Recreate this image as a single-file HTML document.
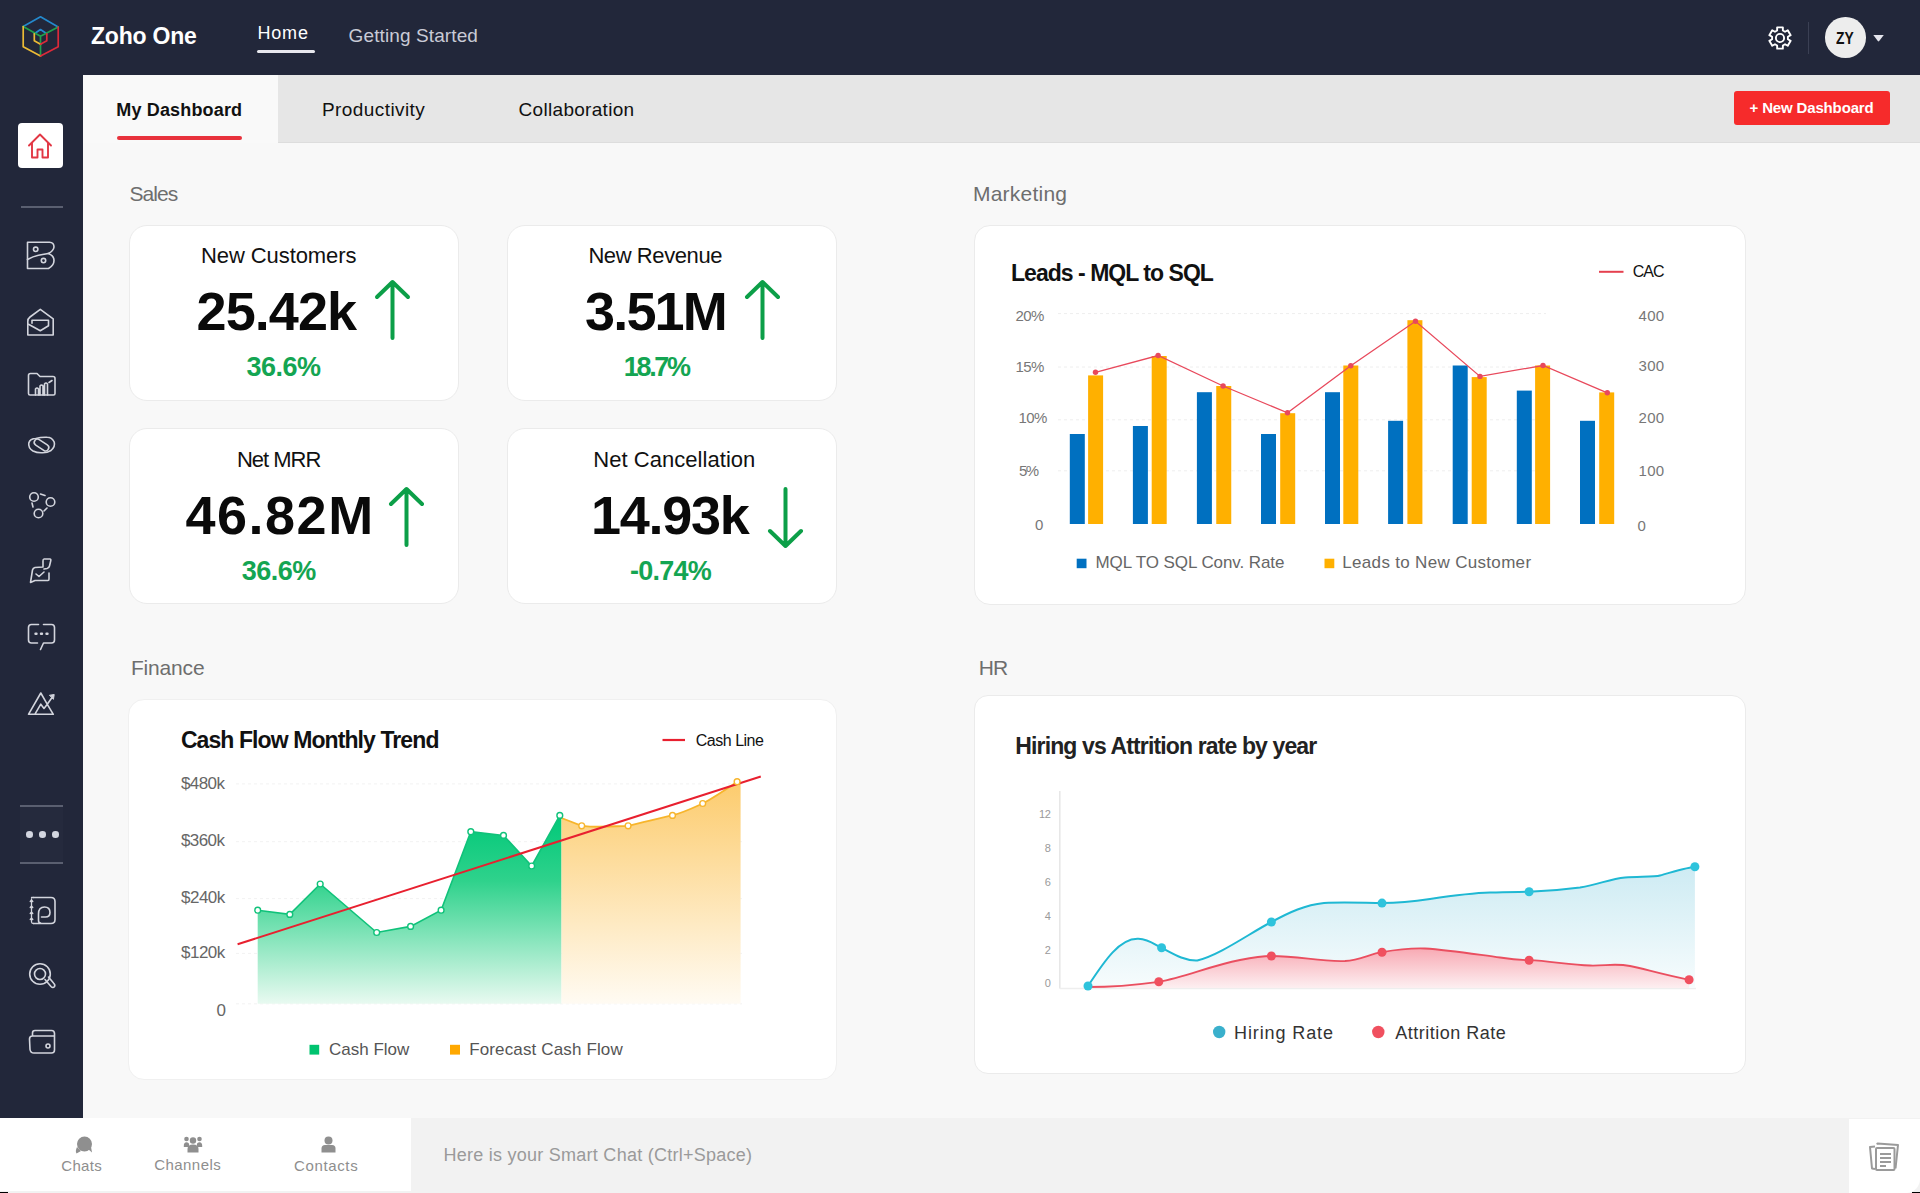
<!DOCTYPE html>
<html><head><meta charset="utf-8">
<style>
*{margin:0;padding:0;box-sizing:border-box}
html,body{width:1920px;height:1193px;overflow:hidden;background:#f8f8f8;font-family:"Liberation Sans",sans-serif}
.abs{position:absolute}
#top{left:0;top:0;width:1920px;height:75px;background:#22273a}
#side{left:0;top:75px;width:83px;height:1043px;background:#22273a}
#tabs{left:83px;top:75px;width:1837px;height:68px;background:#e6e6e6;border-bottom:1px solid #dddddd}
#tabact{left:83px;top:75px;width:195px;height:68px;background:#f9f9f9}
.card{position:absolute;background:#fff;border:1px solid #ebebeb;border-radius:18px}
.sec{position:absolute;font-size:21px;color:#6e6e6e;white-space:nowrap;line-height:1}
.txt{position:absolute;white-space:nowrap;line-height:1}
.big{font-size:54px;font-weight:bold;color:#0a0a0a}
.pct{font-size:27px;font-weight:bold;color:#14a552}
#bottom{left:0;top:1118px;width:1920px;height:75px;background:#f2f2f2}
#bwhite{left:0;top:1118px;width:411px;height:73px;background:#fff}
#bright{left:1849px;top:1119px;width:71px;height:74px;background:#fff;border-bottom-right-radius:14px}
</style></head>
<body>
<div id="top" class="abs"></div>
<div id="side" class="abs"></div>
<div id="tabs" class="abs"></div>
<div id="tabact" class="abs"></div>

<!-- logo -->
<svg class="abs" style="left:0;top:0" width="80" height="75" viewBox="0 0 80 75">
<g fill="none" stroke-width="1.7" stroke-linecap="round" stroke-linejoin="round">
<path d="M23.2 26.5 L40.5 16.8 L58.2 27" stroke="#2489cc"/>
<path d="M34.3 33.8 L40.5 29.5 L46.8 33.8" stroke="#2189cf"/>
<path d="M23.2 26.5 L40.5 36.2 L58.2 27 M40.5 36.2 V56" stroke="#20a04c"/>
<path d="M23.2 26.5 V46.8 L40.5 56 M34.3 33.8 V40.8 L40.5 44.3" stroke="#ecbb35"/>
<path d="M58.2 27 V46.8 L40.5 56 M46.8 33.8 V40.8 L40.5 44.3" stroke="#dc2a3a"/>
</g></svg>

<!-- top right -->
<svg class="abs" style="left:1766.2px;top:23.9px" width="28" height="28" viewBox="0 0 28 28"><g fill="none" stroke="#fff" stroke-width="1.9" stroke-linejoin="round"><path d="M11.13 6.53 L11.15 3.37 L16.85 3.37 L16.87 6.53 L19.03 7.78 L21.78 6.22 L24.63 11.15 L21.90 12.75 L21.90 15.25 L24.63 16.85 L21.78 21.78 L19.03 20.22 L16.87 21.47 L16.85 24.63 L11.15 24.63 L11.13 21.47 L8.97 20.22 L6.22 21.78 L3.37 16.85 L6.10 15.25 L6.10 12.75 L3.37 11.15 L6.22 6.22 L8.97 7.78 Z"/><circle cx="14" cy="14" r="4.1"/></g></svg>
<div class="abs" style="left:1808px;top:22px;width:1px;height:32px;background:#3b4054"></div>
<div class="abs" style="left:1825px;top:17px;width:40.5px;height:40.5px;border-radius:50%;background:#ededed"></div>
<div class="txt" style="left:1835.5px;top:29.6px;font-size:16.5px;font-weight:bold;color:#111;transform:scaleX(0.84);transform-origin:left top">ZY</div>
<svg class="abs" style="left:1872px;top:33px" width="13" height="9" viewBox="0 0 13 9"><path d="M1.3 2 H11.8 L7.2 8 Q6.5 8.8 5.8 8 Z" fill="#e4e4ec"/></svg>

<!-- sidebar -->
<div class="abs" style="left:18px;top:123px;width:45px;height:45px;background:#fff;border-radius:4px"></div>
<svg class="abs" style="left:26px;top:132px" width="28" height="28" viewBox="0 0 28 28"><path d="M3 13.5 L14 2.5 L25 13.5 M6 11 V25.5 H11.5 V17.5 H16.5 V25.5 H22 V11" fill="none" stroke="#e23744" stroke-width="1.9" stroke-linecap="round" stroke-linejoin="round"/></svg>
<div class="abs" style="left:21px;top:206px;width:42px;height:1.5px;background:#5a5f70"></div>
<svg class="abs" style="left:0;top:230px" width="83" height="500" viewBox="0 230 83 500">
<g fill="none" stroke="#d3d5dd" stroke-width="1.6" stroke-linecap="round" stroke-linejoin="round">
<!-- icon1 bigin 27..54, 242..269 -->
<path d="M27.5 242.3 H49.5 Q54 242.5 54 247 Q53.5 251.2 48.2 253.5 Q54 255.5 54 260.5 Q54 265.5 48.5 268.5 H27.5 Z"/>
<path d="M27.5 259.5 Q33 256.5 38.5 255.3 Q44.5 254.3 48.2 253.5"/>
<circle cx="35.7" cy="249.3" r="2.2"/><circle cx="43.5" cy="260.6" r="2.2"/>
<!-- icon2 mail 27..54, 309..336 -->
<path d="M27.8 335 V321.5 Q27.6 318.8 30 317 L40.3 309.3 L53.2 318.8 V335 Z"/>
<path d="M32 323.3 V320.3 H48.5 V325.8 L40.3 330.8 L28.5 324.3"/>
<!-- icon3 folder 28..55, 373..395 -->
<path d="M28.5 375.5 Q28.5 373.5 30.5 373.5 H37 L40 376.5 H53 Q55 376.5 55 378.5 V393.5 Q55 395 53.5 395 H30 Q28.5 395 28.5 393.5 Z"/>
<path d="M35.5 395 V389 Q37 387 38.5 389 V395 M40 395 V386 Q41.5 384 43 386 V395 M44.5 395 V384 Q46 382 47.5 384 V395 M49 382.5 L52 380.5"/>
<!-- icon4 cliq 28..55, 437..453 -->
<path d="M36 438.5 Q30 438.5 28.8 443 Q28 448 33 451 Q37 453 42 452.8 M47 437.3 Q52 437.3 54.2 442 Q55.5 446.5 51 450.5 Q47 453 42 452.8 M36 438.5 Q41 437 47 437.3"/>
<rect x="33.5" y="441.8" width="16" height="6.4" rx="3.2" transform="rotate(33 41.5 445)"/>
<!-- icon5 three circles 29..55, 492..518 -->
<circle cx="34" cy="497" r="4.3"/><circle cx="50.5" cy="502" r="4.3"/><circle cx="38.5" cy="513.5" r="4.3"/>
<path d="M40.5 494 L45 495.5 M32 503 L33 507 M44 511 L47 508"/>
<!-- icon6 sign 30..51, 558..584 -->
<path d="M44 559 H50 Q51 559 50.8 560.5 L49.5 566 Q49 568 47 568.5 L44 569 M44 559 Q43 559 43 561 V567 L35 567.5 Q33 568 32.5 570 L30.5 582.5 L35 580.5 H48 Q49 580.5 49 579 V573"/>
<path d="M36 574 L39 576.5 L44 572"/>
</g></svg>
<svg class="abs" style="left:0;top:615px" width="83" height="450" viewBox="0 615 83 450">
<g fill="none" stroke="#d3d5dd" stroke-width="1.6" stroke-linecap="round" stroke-linejoin="round">
<!-- icon7 chat 28..55, 624..650 -->
<path d="M38.5 624.5 H31.5 Q28.5 624.5 28.5 627.5 V640 Q28.5 643 31.5 643 H37.5 M43.5 624.5 H51.5 Q54.5 624.5 54.5 627.5 V640 Q54.5 643 51.5 643 H43.5 L40.5 649.5"/>
<path d="M35.5 633.8 H36.5 M41 633.8 H42 M46.5 633.8 H47.5" stroke-width="2.4"/>
<!-- icon8 mountain 28..54, 692..715 -->
<path d="M34 714.3 H28.5 L40.8 693 L47.3 704.3 L52 697.5 M34.8 714.3 L40.8 704.2 L44 708.4 L47.3 704.3 L53.3 714.3 Z"/><path d="M49.8 695.2 L54.2 694.5 L53.5 699 Z" fill="#d3d5dd" stroke-width="1"/>
<!-- icon9 notebook 29..55, 897..924 -->
<path d="M33.5 897.5 H51 Q55 897.5 55 901.5 V919.5 Q55 923.5 51 923.5 H33.5"/>
<path d="M31.5 899 V922 M30.2 901.5 L31.5 900 L32.8 901.5 M30.2 907.5 L31.5 906 L32.8 907.5 M30.2 913.5 L31.5 912 L32.8 913.5 M30.2 919.5 L31.5 918 L32.8 919.5 M31.5 897.5 Q31.5 897.5 33.5 897.5 M31.5 922 Q31.5 923.5 33.5 923.5" stroke-width="1.3"/>
<path d="M40.5 923 Q38.5 923 38.5 920.5 V914 Q38.5 907 44.5 907 Q50 907 50 912.5 Q50 917 45.5 917 H41.5"/>
<!-- icon10 search 29..55, 963..989 -->
<circle cx="40" cy="974" r="10.3"/><circle cx="40" cy="974" r="5.5"/>
<path d="M45 979.5 L51 986.5 Q53 988.5 54.5 986.5 Q55.5 985 53.5 983 L48.5 977"/>
<!-- icon11 wallet 29..55, 1030..1053 -->
<path d="M32.5 1036 V1033 Q32.5 1030.5 35 1030.5 H51.5 Q54.5 1030.5 54.5 1033.5 V1050 Q54.5 1053 51.5 1053 H34 Q30.5 1053 30 1049.5 L29.5 1039 Q29.5 1036 32.5 1036 H54.5"/>
<circle cx="48" cy="1046" r="2"/>
</g></svg>
<div class="abs" style="left:20px;top:805px;width:43px;height:1.5px;background:#5a5f70"></div>
<div class="abs" style="left:20px;top:807px;width:43px;height:55px;background:#252a3d"></div>
<div class="abs" style="left:20px;top:862px;width:43px;height:1.5px;background:#5a5f70"></div>
<div class="abs" style="left:26px;top:831px;width:6.6px;height:6.6px;border-radius:50%;background:#d3d6e0"></div>
<div class="abs" style="left:39.2px;top:831px;width:6.6px;height:6.6px;border-radius:50%;background:#d3d6e0"></div>
<div class="abs" style="left:52.2px;top:831px;width:6.6px;height:6.6px;border-radius:50%;background:#d3d6e0"></div>

<!-- top texts -->
<div class="txt" style="left:91px;top:24.9px;font-size:23px;font-weight:bold;color:#fff;letter-spacing:-0.22px">Zoho One</div>
<div class="txt" style="left:257.5px;top:23.5px;font-size:18px;color:#fff;letter-spacing:0.8px">Home</div>
<div class="abs" style="left:257px;top:50px;width:58px;height:3px;background:#e8e8ee;border-radius:2px"></div>
<div class="txt" style="left:348.6px;top:25.9px;font-size:19px;color:#c9cbd6;letter-spacing:0.11px">Getting Started</div>

<!-- tabs -->
<div class="txt" style="left:116.3px;top:100.8px;font-size:18px;font-weight:bold;color:#111;letter-spacing:0.16px">My Dashboard</div>
<div class="abs" style="left:117px;top:136px;width:125px;height:4px;background:#e8323c;border-radius:2px"></div>
<div class="txt" style="left:321.9px;top:99.9px;font-size:19px;color:#111;letter-spacing:0.43px">Productivity</div>
<div class="txt" style="left:518.6px;top:99.9px;font-size:19px;color:#111;letter-spacing:0.3px">Collaboration</div>
<div class="abs" style="left:1734px;top:91px;width:156px;height:34px;background:#f62b2b;border-radius:3px"></div>
<div class="txt" style="left:1749.5px;top:100.4px;font-size:15px;font-weight:bold;color:#fff;letter-spacing:-0.15px">+ New Dashboard</div>

<!-- section labels -->
<div class="sec" style="left:129.4px;top:182.9px;letter-spacing:-0.9px">Sales</div>
<div class="sec" style="left:973px;top:182.5px;letter-spacing:0.22px">Marketing</div>
<div class="sec" style="left:130.9px;top:657.2px;letter-spacing:-0.17px">Finance</div>
<div class="sec" style="left:978.8px;top:657.2px;letter-spacing:-1px">HR</div>

<!-- cards -->
<div class="card" style="left:129px;top:225px;width:330px;height:176px"></div>
<div class="card" style="left:507px;top:225px;width:330px;height:176px"></div>
<div class="card" style="left:129px;top:428px;width:330px;height:176px"></div>
<div class="card" style="left:507px;top:428px;width:330px;height:176px"></div>
<div class="card" style="left:974px;top:225px;width:772px;height:380px;border-radius:16px"></div>
<div class="card" style="left:128px;top:699px;width:709px;height:381px;border-radius:16px;border-color:#f0f0f0"></div>
<div class="card" style="left:974px;top:695px;width:772px;height:379px;border-radius:14px"></div>

<!-- marketing chart -->
<svg class="abs" style="left:975px;top:226px" width="771" height="378" viewBox="975 226 771 378">
<g font-family="Liberation Sans" >
<text x="1011" y="280.5" font-size="23" font-weight="bold" fill="#111" letter-spacing="-0.97">Leads - MQL to SQL</text>
<line x1="1599" y1="271.8" x2="1623.5" y2="271.8" stroke="#e5404f" stroke-width="2"/>
<text x="1632.7" y="277.3" font-size="16" fill="#111" letter-spacing="-1">CAC</text>
<line x1="1058" y1="313.6" x2="1546" y2="313.6" stroke="#eeeeee" stroke-width="1" stroke-dasharray="3 3"/>
<line x1="1058" y1="367" x2="1546" y2="367" stroke="#eeeeee" stroke-width="1" stroke-dasharray="3 3"/>
<line x1="1058" y1="419.8" x2="1546" y2="419.8" stroke="#eeeeee" stroke-width="1" stroke-dasharray="3 3"/>
<line x1="1058" y1="470.8" x2="1546" y2="470.8" stroke="#eeeeee" stroke-width="1" stroke-dasharray="3 3"/>
<text x="1015.6" y="321" font-size="15" fill="#777" letter-spacing="-0.69">20%</text>
<text x="1015.6" y="371.7" font-size="15" fill="#777" letter-spacing="-0.69">15%</text>
<text x="1018.4" y="422.5" font-size="15" fill="#777" letter-spacing="-0.54">10%</text>
<text x="1019" y="475.6" font-size="15" fill="#777" letter-spacing="-1.59">5%</text>
<text x="1035" y="530.2" font-size="15" fill="#777" letter-spacing="0">0</text>
<text x="1638.6" y="321.1" font-size="15" fill="#777" letter-spacing="0.26">400</text>
<text x="1638.6" y="371.4" font-size="15" fill="#777" letter-spacing="0.26">300</text>
<text x="1638.6" y="422.5" font-size="15" fill="#777" letter-spacing="0.26">200</text>
<text x="1638.6" y="475.9" font-size="15" fill="#777" letter-spacing="0.26">100</text>
<text x="1637.5" y="530.6" font-size="15" fill="#777" letter-spacing="0.26">0</text>
<rect x="1069.8" y="434" width="15" height="90" fill="#0070c0"/>
<rect x="1132.9" y="426" width="15" height="98" fill="#0070c0"/>
<rect x="1196.9" y="392.2" width="15" height="131.8" fill="#0070c0"/>
<rect x="1261" y="434" width="15" height="90" fill="#0070c0"/>
<rect x="1325" y="392.2" width="15" height="131.8" fill="#0070c0"/>
<rect x="1388.1" y="420.8" width="15" height="103.19999999999999" fill="#0070c0"/>
<rect x="1452.7" y="365.5" width="15" height="158.5" fill="#0070c0"/>
<rect x="1516.8" y="390.6" width="15" height="133.39999999999998" fill="#0070c0"/>
<rect x="1580" y="420.8" width="15" height="103.19999999999999" fill="#0070c0"/>
<rect x="1088.1" y="375.4" width="15" height="148.60000000000002" fill="#ffb000"/>
<rect x="1151.7" y="356" width="15" height="168" fill="#ffb000"/>
<rect x="1216.25" y="386" width="15" height="138" fill="#ffb000"/>
<rect x="1280.2" y="413.2" width="15" height="110.80000000000001" fill="#ffb000"/>
<rect x="1343.3" y="365.5" width="15" height="158.5" fill="#ffb000"/>
<rect x="1407.4" y="320.2" width="15" height="203.8" fill="#ffb000"/>
<rect x="1471.7" y="377.1" width="15" height="146.89999999999998" fill="#ffb000"/>
<rect x="1535.1" y="365.5" width="15" height="158.5" fill="#ffb000"/>
<rect x="1599.2" y="392.4" width="15" height="131.60000000000002" fill="#ffb000"/>
<polyline points="1095.5,372.3 1158.1,355.5 1223.1,386 1287.5,412.8 1350.8,365.8 1415.5,321.3 1480,376.4 1543,365.5 1607.3,392.8" fill="none" stroke="#e8495c" stroke-width="1.3"/>
<circle cx="1095.5" cy="372.3" r="2.7" fill="#e8495c"/>
<circle cx="1158.1" cy="355.5" r="2.7" fill="#e8495c"/>
<circle cx="1223.1" cy="386" r="2.7" fill="#e8495c"/>
<circle cx="1287.5" cy="412.8" r="2.7" fill="#e8495c"/>
<circle cx="1350.8" cy="365.8" r="2.7" fill="#e8495c"/>
<circle cx="1415.5" cy="321.3" r="2.7" fill="#e8495c"/>
<circle cx="1480" cy="376.4" r="2.7" fill="#e8495c"/>
<circle cx="1543" cy="365.5" r="2.7" fill="#e8495c"/>
<circle cx="1607.3" cy="392.8" r="2.7" fill="#e8495c"/>
<rect x="1076.7" y="558.7" width="9.8" height="9.5" fill="#0070c0"/>
<text x="1095.5" y="567.7" font-size="17" fill="#666" letter-spacing="-0.08">MQL TO SQL Conv. Rate</text>
<rect x="1324.5" y="558.7" width="9.8" height="9.5" fill="#ffb000"/>
<text x="1342.3" y="568" font-size="17" fill="#666" letter-spacing="0.32">Leads to New Customer</text>
</g></svg>
<!-- finance chart -->
<svg class="abs" style="left:129px;top:699px" width="708" height="381" viewBox="129 699 708 381">
<defs><linearGradient id="gg" x1="0" y1="815" x2="0" y2="1004" gradientUnits="userSpaceOnUse"><stop offset="0" stop-color="#00c878"/><stop offset="0.35" stop-color="#2fd28c"/><stop offset="1" stop-color="#e9faf1"/></linearGradient>
<linearGradient id="og" x1="0" y1="780" x2="0" y2="1004" gradientUnits="userSpaceOnUse"><stop offset="0" stop-color="#fccb6c"/><stop offset="1" stop-color="#fffbf3"/></linearGradient></defs>
<g font-family="Liberation Sans">
<text x="180.9" y="747.5" font-size="23" font-weight="bold" fill="#111" letter-spacing="-0.91">Cash Flow Monthly Trend</text>
<line x1="662.5" y1="740" x2="685" y2="740" stroke="#e8202f" stroke-width="2.2"/>
<text x="695.8" y="745.8" font-size="16" fill="#111" letter-spacing="-0.49">Cash Line</text>
<line x1="236" y1="783.9" x2="742" y2="783.9" stroke="#f2f2f2" stroke-width="1" stroke-dasharray="3 3"/>
<line x1="236" y1="841.7" x2="742" y2="841.7" stroke="#f2f2f2" stroke-width="1" stroke-dasharray="3 3"/>
<line x1="236" y1="898.6" x2="742" y2="898.6" stroke="#f2f2f2" stroke-width="1" stroke-dasharray="3 3"/>
<line x1="236" y1="953.4" x2="742" y2="953.4" stroke="#f2f2f2" stroke-width="1" stroke-dasharray="3 3"/>
<line x1="236" y1="1003.8" x2="742" y2="1003.8" stroke="#f2f2f2" stroke-width="1" stroke-dasharray="3 3"/>
<text x="180.9" y="789.3" font-size="17" fill="#666" letter-spacing="-0.55">$480k</text>
<text x="180.9" y="846" font-size="17" fill="#666" letter-spacing="-0.55">$360k</text>
<text x="181.1" y="903.1" font-size="17" fill="#666" letter-spacing="-0.55">$240k</text>
<text x="181.1" y="957.5" font-size="17" fill="#666" letter-spacing="-0.55">$120k</text>
<text x="216.5" y="1016" font-size="17" fill="#666">0</text>
<path d="M257.7,1003.8 L257.7,910.2 L289.8,914.4 L320.2,884 L376.7,932.5 L410.6,926.4 L441.1,910.2 L470.8,831.7 L503.5,835.4 L531.7,866 L559.8,815.4 L561.5,815.4 L561.5,1003.8 Z" fill="url(#gg)"/>
<path d="M561.5,1003.8 L561.5,818 L581.7,825.8 C600,828 615,826 628.1,825.8 C645,822 660,818 672.5,815.4 C685,812 695,807 702.7,803.5 C715,797 728,788 737.1,781.7 L740.6,781 L740.6,1003.8 Z" fill="url(#og)"/>
<polyline points="257.7,910.2 289.8,914.4 320.2,884 376.7,932.5 410.6,926.4 441.1,910.2 470.8,831.7 503.5,835.4 531.7,866 559.8,815.4" fill="none" stroke="#10c27a" stroke-width="1.6"/>
<path d="M561.5,818 L581.7,825.8 C600,828 615,826 628.1,825.8 C645,822 660,818 672.5,815.4 C685,812 695,807 702.7,803.5 C715,797 728,788 737.1,781.7" fill="none" stroke="#f7b52c" stroke-width="1.8"/>
<line x1="237.6" y1="944.3" x2="760.8" y2="776.5" stroke="#e8202f" stroke-width="2"/>
<circle cx="257.7" cy="910.2" r="2.9" fill="#fff" stroke="#10c27a" stroke-width="1.4"/>
<circle cx="289.8" cy="914.4" r="2.9" fill="#fff" stroke="#10c27a" stroke-width="1.4"/>
<circle cx="320.2" cy="884" r="2.9" fill="#fff" stroke="#10c27a" stroke-width="1.4"/>
<circle cx="376.7" cy="932.5" r="2.9" fill="#fff" stroke="#10c27a" stroke-width="1.4"/>
<circle cx="410.6" cy="926.4" r="2.9" fill="#fff" stroke="#10c27a" stroke-width="1.4"/>
<circle cx="441.1" cy="910.2" r="2.9" fill="#fff" stroke="#10c27a" stroke-width="1.4"/>
<circle cx="470.8" cy="831.7" r="2.9" fill="#fff" stroke="#10c27a" stroke-width="1.4"/>
<circle cx="503.5" cy="835.4" r="2.9" fill="#fff" stroke="#10c27a" stroke-width="1.4"/>
<circle cx="531.7" cy="866" r="2.9" fill="#fff" stroke="#10c27a" stroke-width="1.4"/>
<circle cx="559.8" cy="815.4" r="2.9" fill="#fff" stroke="#10c27a" stroke-width="1.4"/>
<circle cx="581.7" cy="825.8" r="2.9" fill="#fff" stroke="#f7b52c" stroke-width="1.4"/>
<circle cx="628.1" cy="825.8" r="2.9" fill="#fff" stroke="#f7b52c" stroke-width="1.4"/>
<circle cx="672.5" cy="815.4" r="2.9" fill="#fff" stroke="#f7b52c" stroke-width="1.4"/>
<circle cx="702.7" cy="803.5" r="2.9" fill="#fff" stroke="#f7b52c" stroke-width="1.4"/>
<circle cx="737.1" cy="781.7" r="2.9" fill="#fff" stroke="#f7b52c" stroke-width="1.4"/>
<rect x="309.5" y="1044.8" width="9.7" height="9.8" fill="#00c36f"/>
<text x="329" y="1054.6" font-size="17" fill="#555">Cash Flow</text>
<rect x="450" y="1044.8" width="10" height="9.8" fill="#ffa800"/>
<text x="469.2" y="1054.8" font-size="17" fill="#555" letter-spacing="0.14">Forecast Cash Flow</text>
</g></svg>
<!-- hr chart -->
<svg class="abs" style="left:975px;top:695px" width="770" height="378" viewBox="975 695 770 378">
<defs><linearGradient id="hg" x1="0" y1="866" x2="0" y2="988" gradientUnits="userSpaceOnUse"><stop offset="0" stop-color="#cdebf3"/><stop offset="1" stop-color="#f7fcfd"/></linearGradient>
<linearGradient id="ag" x1="0" y1="948" x2="0" y2="988" gradientUnits="userSpaceOnUse"><stop offset="0" stop-color="#f8a9b3"/><stop offset="1" stop-color="#fdeff1"/></linearGradient></defs>
<g font-family="Liberation Sans">
<text x="1015.3" y="753.5" font-size="23" font-weight="bold" fill="#222" letter-spacing="-0.87">Hiring vs Attrition rate by year</text>
<line x1="1059.8" y1="791" x2="1059.8" y2="988.5" stroke="#e6e6e6" stroke-width="1.5"/>
<line x1="1059.8" y1="988.5" x2="1696" y2="988.5" stroke="#eeeeee" stroke-width="1.5"/>
<text x="1050.3" y="817.9" font-size="11" fill="#9a9a9a" text-anchor="end" letter-spacing="-0.5">12</text>
<text x="1050.3" y="851.9" font-size="11" fill="#9a9a9a" text-anchor="end" letter-spacing="-0.5">8</text>
<text x="1050.3" y="885.8" font-size="11" fill="#9a9a9a" text-anchor="end" letter-spacing="-0.5">6</text>
<text x="1050.3" y="919.7" font-size="11" fill="#9a9a9a" text-anchor="end" letter-spacing="-0.5">4</text>
<text x="1050.3" y="953.6" font-size="11" fill="#9a9a9a" text-anchor="end" letter-spacing="-0.5">2</text>
<text x="1050.3" y="987.1" font-size="11" fill="#9a9a9a" text-anchor="end" letter-spacing="-0.5">0</text>
<path d="M1088,986 C1105,960 1120,938 1138.3,938.8 C1150,939.5 1155,945 1161.6,947.8 C1175,955 1185,961 1197.3,960.5 C1220,955 1250,933 1271.4,922 C1290,912 1305,905 1324,903 C1345,902 1365,903 1382,903.1 C1400,903 1410,902 1430,899 C1450,896 1470,893 1490,892.5 C1505,892 1515,892 1529.1,891.8 C1550,891 1565,889.5 1580,887.5 C1600,884 1610,879 1625,877.5 C1640,876.5 1655,877 1660,875.5 C1672,872 1685,868 1694.9,866.7 L1694.9,988 L1088,988 Z" fill="url(#hg)"/>
<path d="M1088,987 C1110,987 1135,985 1158.8,981.8 C1185,977 1210,966 1240,960 C1255,957 1262,956 1271.4,956 C1300,956 1320,962 1345,961 C1360,960 1370,954 1382,952.2 C1400,949 1410,948 1425,948.5 C1450,950 1480,955 1500,957.5 C1510,959 1520,960 1529.1,960.2 C1550,961 1570,965 1590,965.5 C1605,966 1615,963 1630,966 C1645,969 1660,974 1689.1,979.8 L1689.1,988 L1088,988 Z" fill="url(#ag)"/>
<path d="M1088,986 C1105,960 1120,938 1138.3,938.8 C1150,939.5 1155,945 1161.6,947.8 C1175,955 1185,961 1197.3,960.5 C1220,955 1250,933 1271.4,922 C1290,912 1305,905 1324,903 C1345,902 1365,903 1382,903.1 C1400,903 1410,902 1430,899 C1450,896 1470,893 1490,892.5 C1505,892 1515,892 1529.1,891.8 C1550,891 1565,889.5 1580,887.5 C1600,884 1610,879 1625,877.5 C1640,876.5 1655,877 1660,875.5 C1672,872 1685,868 1694.9,866.7" fill="none" stroke="#1fb8d3" stroke-width="2"/>
<path d="M1088,987 C1110,987 1135,985 1158.8,981.8 C1185,977 1210,966 1240,960 C1255,957 1262,956 1271.4,956 C1300,956 1320,962 1345,961 C1360,960 1370,954 1382,952.2 C1400,949 1410,948 1425,948.5 C1450,950 1480,955 1500,957.5 C1510,959 1520,960 1529.1,960.2 C1550,961 1570,965 1590,965.5 C1605,966 1615,963 1630,966 C1645,969 1660,974 1689.1,979.8" fill="none" stroke="#ea4f60" stroke-width="1.8"/>
<circle cx="1161.6" cy="947.8" r="4.5" fill="#2ec3dc"/>
<circle cx="1271.4" cy="922" r="4.5" fill="#2ec3dc"/>
<circle cx="1382" cy="903.1" r="4.5" fill="#2ec3dc"/>
<circle cx="1529.1" cy="891.8" r="4.5" fill="#2ec3dc"/>
<circle cx="1694.9" cy="866.7" r="4.5" fill="#2ec3dc"/>
<circle cx="1088" cy="986" r="4.5" fill="#2ec3dc"/>
<circle cx="1158.8" cy="981.8" r="4.5" fill="#f0505f"/>
<circle cx="1271.4" cy="956" r="4.5" fill="#f0505f"/>
<circle cx="1382" cy="952.2" r="4.5" fill="#f0505f"/>
<circle cx="1529.1" cy="960.2" r="4.5" fill="#f0505f"/>
<circle cx="1689.1" cy="979.8" r="4.5" fill="#f0505f"/>
<circle cx="1219.2" cy="1032" r="6.2" fill="#3ab0cc"/>
<text x="1234" y="1038.8" font-size="18" fill="#333" letter-spacing="0.9">Hiring Rate</text>
<circle cx="1378.3" cy="1032" r="6.2" fill="#f0505f"/>
<text x="1395.2" y="1038.8" font-size="18" fill="#333" letter-spacing="0.5">Attrition Rate</text>
</g></svg>
<!-- sales card contents -->
<div class="txt" style="left:201px;top:244.9px;font-size:22px;color:#111;letter-spacing:-0.08px">New Customers</div>
<div class="txt big" style="left:196.6px;top:284.3px;letter-spacing:-0.95px">25.42k</div>
<div class="txt pct" style="left:246.4px;top:353.8px;letter-spacing:-0.49px">36.6%</div>
<svg class="abs" style="left:374px;top:279px" width="37" height="62" viewBox="0 0 37 62"><path d="M18.5 3 V59 M3 18 L18.5 3 L34 18" fill="none" stroke="#0c9f48" stroke-width="4" stroke-linecap="round" stroke-linejoin="round"/></svg>

<div class="txt" style="left:588.4px;top:244.5px;font-size:22px;color:#111;letter-spacing:-0.41px">New Revenue</div>
<div class="txt big" style="left:585px;top:284px;letter-spacing:-1.82px">3.51M</div>
<div class="txt pct" style="left:623.8px;top:354.1px;letter-spacing:-2.34px">18.7%</div>
<svg class="abs" style="left:743.5px;top:279px" width="37" height="62" viewBox="0 0 37 62"><path d="M18.5 3 V59 M3 18 L18.5 3 L34 18" fill="none" stroke="#0c9f48" stroke-width="4" stroke-linecap="round" stroke-linejoin="round"/></svg>

<div class="txt" style="left:237px;top:448.7px;font-size:22px;color:#111;letter-spacing:-1.03px">Net MRR</div>
<div class="txt big" style="left:185.4px;top:488.3px;letter-spacing:1.53px">46.82M</div>
<div class="txt pct" style="left:241.7px;top:557.9px;letter-spacing:-0.49px">36.6%</div>
<svg class="abs" style="left:387.5px;top:486px" width="37" height="62" viewBox="0 0 37 62"><path d="M18.5 3 V59 M3 18 L18.5 3 L34 18" fill="none" stroke="#0c9f48" stroke-width="4" stroke-linecap="round" stroke-linejoin="round"/></svg>

<div class="txt" style="left:593.2px;top:448.7px;font-size:22px;color:#111;letter-spacing:0.05px">Net Cancellation</div>
<div class="txt big" style="left:591px;top:488.3px;letter-spacing:-1.27px">14.93k</div>
<div class="txt pct" style="left:630px;top:557.9px;letter-spacing:-0.77px">-0.74%</div>
<svg class="abs" style="left:766.5px;top:487px" width="37" height="62" viewBox="0 0 37 62"><path d="M18.5 2 V59 M3 44 L18.5 59 L34 44" fill="none" stroke="#0c9f48" stroke-width="4" stroke-linecap="round" stroke-linejoin="round"/></svg>

<!-- bottom -->
<div id="bottom" class="abs"></div>
<div id="bwhite" class="abs"></div>
<div id="bright" class="abs"></div>
<!-- bottom icons -->
<svg class="abs" style="left:74px;top:1136px" width="20" height="19" viewBox="0 0 20 19"><circle cx="10.5" cy="8" r="7.5" fill="#8f8f8f"/><path d="M3 11 Q1 15 2.5 17.5 L7 15 Z" fill="#8f8f8f"/><path d="M14 13 L18 16.5 L17 11 Z" fill="#8f8f8f"/></svg>
<div class="txt" style="left:61.25px;top:1157.5px;font-size:15px;color:#8e8e8e;letter-spacing:0.33px">Chats</div>
<svg class="abs" style="left:183px;top:1136px" width="20" height="17" viewBox="0 0 20 17"><g fill="#8f8f8f"><circle cx="3.5" cy="3" r="2.3"/><circle cx="16.5" cy="3" r="2.3"/><circle cx="10" cy="4.5" r="3.2"/><path d="M0.8 10 Q0.8 6.3 3.5 6.3 Q6 6.3 6.2 9 L6.2 11 H0.8 Z"/><path d="M19.2 10 Q19.2 6.3 16.5 6.3 Q14 6.3 13.8 9 L13.8 11 H19.2 Z"/><path d="M4.5 16.5 V13 Q4.5 8.5 10 8.5 Q15.5 8.5 15.5 13 V16.5 Z"/></g></svg>
<div class="txt" style="left:154.2px;top:1157px;font-size:15px;color:#8e8e8e;letter-spacing:0.45px">Channels</div>
<svg class="abs" style="left:321px;top:1136px" width="15" height="17" viewBox="0 0 15 17"><g fill="#8f8f8f"><circle cx="7.5" cy="4.5" r="4"/><path d="M0.5 16.5 V12.5 Q0.5 9 4 9 H11 Q14.5 9 14.5 12.5 V16.5 Z"/></g></svg>
<div class="txt" style="left:294.1px;top:1158px;font-size:15px;color:#8e8e8e;letter-spacing:0.62px">Contacts</div>
<svg class="abs" style="left:1867px;top:1141px" width="34" height="31" viewBox="0 0 34 31"><g fill="none" stroke="#9a9a9a" stroke-width="2" stroke-linejoin="round"><path d="M8 5.5 L3 6 L5 27.5 L8 28"/><path d="M10 3.5 L10.5 2.5 L31 4 L28.5 27.5"/><rect x="9" y="7" width="18.5" height="22" rx="1"/></g><g stroke="#9a9a9a" stroke-width="2"><path d="M13 13 H24 M13 17 H24 M13 21 H24 M13 25 H19"/></g></svg>
<div class="txt" style="left:443.4px;top:1145.5px;font-size:18px;color:#9a9a9a;letter-spacing:0.26px">Here is your Smart Chat (Ctrl+Space)</div>
<div class="abs" style="left:0;top:1191.5px;width:8px;height:2px;background:#000"></div>
<div class="abs" style="left:1912px;top:1191.5px;width:8px;height:2px;background:#000"></div>
</body></html>
